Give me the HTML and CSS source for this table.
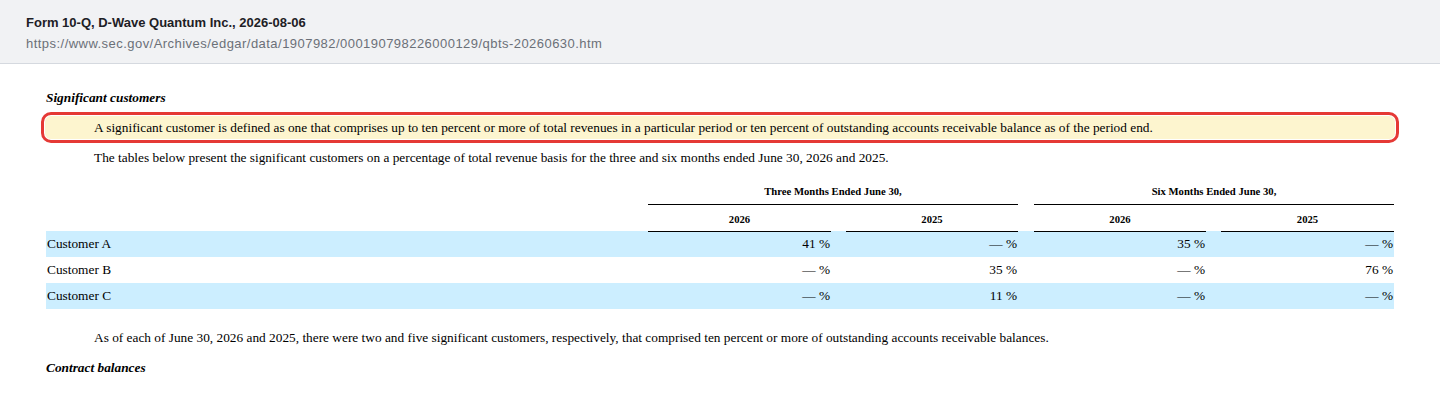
FILE: index.html
```html
<!DOCTYPE html>
<html lang="en">
<head>
<meta charset="utf-8">
<title>Form 10-Q, D-Wave Quantum Inc., 2026-08-06</title>
<link rel="stylesheet" href="styles.css">
</head>
<body>
<header class="doc-header">
  <div class="doc-title">Form 10-Q, D-Wave Quantum Inc., 2026-08-06</div>
  <div class="doc-url">https://www.sec.gov/Archives/edgar/data/1907982/000190798226000129/qbts-20260630.htm</div>
</header>
<main class="doc">
  <p class="heading">Significant customers</p>
  <p class="para highlight">A significant customer is defined as one that comprises up to ten percent or more of total revenues in a particular period or ten percent of outstanding accounts receivable balance as of the period end.</p>
  <p class="para after-hl">The tables below present the significant customers on a percentage of total revenue basis for the three and six months ended June 30, 2026 and 2025.</p>
  <table class="cust">
    <colgroup>
      <col class="c-label">
      <col class="c-wide">
      <col class="c-gap">
      <col class="c-num">
      <col class="c-gap2">
      <col class="c-num">
      <col class="c-gap">
      <col class="c-num4">
    </colgroup>
    <thead>
      <tr class="h1">
        <th></th>
        <th colspan="3" class="rule">Three Months Ended June 30,</th>
        <th></th>
        <th colspan="3" class="rule">Six Months Ended June 30,</th>
      </tr>
      <tr class="h2">
        <th></th>
        <th>2026</th>
        <th></th>
        <th>2025</th>
        <th></th>
        <th>2026</th>
        <th></th>
        <th>2025</th>
      </tr>
    </thead>
    <tbody>
      <tr class="shade first">
        <td class="label">Customer A</td>
        <td class="num">41 %</td><td></td>
        <td class="num">— %</td><td></td>
        <td class="num">35 %</td><td></td>
        <td class="num">— %</td>
      </tr>
      <tr>
        <td class="label">Customer B</td>
        <td class="num">— %</td><td></td>
        <td class="num">35 %</td><td></td>
        <td class="num">— %</td><td></td>
        <td class="num">76 %</td>
      </tr>
      <tr class="shade">
        <td class="label">Customer C</td>
        <td class="num">— %</td><td></td>
        <td class="num">11 %</td><td></td>
        <td class="num">— %</td><td></td>
        <td class="num">— %</td>
      </tr>
    </tbody>
  </table>
  <p class="para after-table">As of each of June 30, 2026 and 2025, there were two and five significant customers, respectively, that comprised ten percent or more of outstanding accounts receivable balances.</p>
  <p class="heading last">Contract balances</p>
</main>
</body>
</html>
```

FILE: styles.css
```css
html, body {
  margin: 0;
  padding: 0;
  background: #ffffff;
}

.doc-header {
  background: #f1f2f4;
  border-bottom: 1px solid #d5d9df;
  padding: 12px 26px 9px;
  font-family: "Liberation Sans", Arial, sans-serif;
  font-size: 13px;
  line-height: 21px;
}

.doc-title {
  font-weight: bold;
  color: #1d2025;
}

.doc-url {
  color: #6b7078;
  letter-spacing: 0.46px;
}

.doc {
  padding: 26px 46px 0;
  font-family: "Liberation Serif", "Times New Roman", serif;
  font-size: 13.33px;
  line-height: 16px;
  color: #000;
}

.doc p {
  margin: 0;
}

.heading {
  font-weight: bold;
  font-style: italic;
}

.para {
  text-indent: 48px;
}

.highlight {
  margin: 10px -1px 0 !important;
  padding: 4px 1px 4px 1px;
  line-height: 15px;
  background: #fdf5cf;
  border-radius: 6px;
  outline: 3px solid #e53935;
  outline-offset: 1px;
}

.after-hl {
  margin-top: 11px !important;
}

.cust {
  margin-top: 10px;
  width: 1348px;
  table-layout: fixed;
  border-collapse: collapse;
  border-spacing: 0;
}

.c-label { width: 602px; }
.c-wide { width: 183px; }
.c-gap { width: 15px; }
.c-gap2 { width: 16px; }
.c-num { width: 172px; }
.c-num4 { width: 173px; }

.cust th {
  padding: 1px 0 0;
  font-size: 10.67px;
  font-weight: bold;
  text-align: center;
}

.cust .h1 th {
  height: 27px;
}

.cust .h2 th {
  height: 25px;
}

.cust th.rule {
  border-bottom: 1px solid #000;
}

.cust td {
  padding: 0;
  height: 26px;
}

.cust tr.shade td {
  background: #cceeff;
}

.cust tr.first td.num {
  background: linear-gradient(#000, #000) top / 100% 1px no-repeat, #cceeff;
}

.cust td.label {
  padding-left: 1px;
}

.cust td.num {
  text-align: right;
  padding-right: 1px;
}

.after-table {
  margin-top: 21px !important;
}

.last {
  margin-top: 14px !important;
}
```
